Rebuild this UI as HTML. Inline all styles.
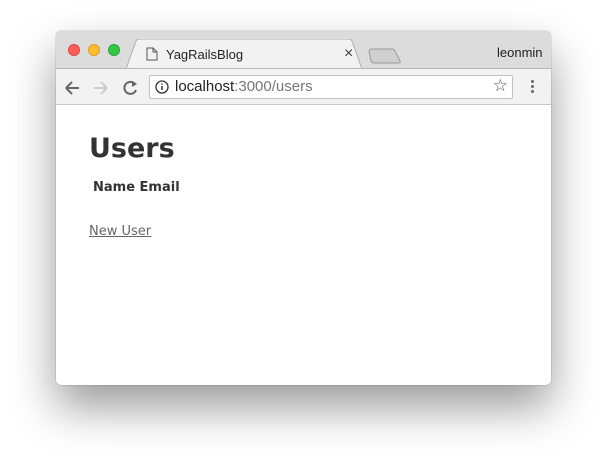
<!DOCTYPE html>
<html><head><style>
body{margin:0;width:607px;height:466px;background:#fff;position:relative;overflow:hidden;font-family:"Liberation Sans",sans-serif}
.win{position:absolute;left:56px;top:31px;width:495px;height:354px;border-radius:5px;background:#fff;box-shadow:0 22px 45px rgba(0,0,0,.4),0 0 1px rgba(0,0,0,.5);overflow:hidden}
.tabbar{position:absolute;left:0;top:0;width:495px;height:37px;background:#dcdcdc}
.dot{position:absolute;top:13px;width:12px;height:12px;border-radius:50%}
.tool{position:absolute;left:0;top:37px;width:495px;height:37px;background:#f2f2f2;border-bottom:1px solid #c8c8c8;border-top:1px solid #b8b8b8;box-sizing:border-box}
.url{position:absolute;left:93px;top:6px;width:364px;height:24px;background:#fff;border:1px solid #c2c2c2;border-radius:2px;box-sizing:border-box;font-size:15px;line-height:22px;color:#222}
.c{position:absolute;font-family:"DejaVu Sans",Verdana,sans-serif;color:#333}
</style></head><body>
<div class="win">
<div class="tabbar">
<div class="dot" style="left:12px;background:#fc5f57;border:.5px solid #de4a43;box-sizing:border-box"></div>
<div class="dot" style="left:32px;background:#fdbc2e;border:.5px solid #dea123;box-sizing:border-box"></div>
<div class="dot" style="left:52px;background:#33c748;border:.5px solid #27a63a;box-sizing:border-box"></div>
<svg style="position:absolute;left:70px;top:8px" width="280" height="30"><path d="M0 30 L10 2 Q11 0 14 0 L222 0 Q225 0 226 2 L236 30 Z" fill="#f2f2f2" stroke="#b0b0b0"/><path d="M243 12 Q244 10 246 10 L266 10 Q268 10 269 12 L274 22 Q275 24 272 24 L248 24 Q246 24 245 22 Z" fill="#cfcfcf" stroke="#9a9a9a"/></svg>
<svg style="position:absolute;left:90px;top:16px" width="12" height="14"><path d="M1 1h6l4 4v8H1z M7 1v4h4" fill="none" stroke="#555"/></svg>
<div style="position:absolute;left:110px;top:16px;font-size:13px;color:#222">YagRailsBlog</div>
<div style="position:absolute;left:288px;top:14px;font-size:16px;color:#444">×</div>
<div style="position:absolute;left:441px;top:14px;font-size:13px;color:#222">leonmin</div>
</div>
<div class="tool">
<svg style="position:absolute;left:8px;top:10px" width="80" height="18"><path d="M2 9h13M2 9l6-6M2 9l6 6" stroke="#666" stroke-width="2" fill="none"/><path d="M30 9h13M43 9l-6-6M43 9l-6 6" stroke="#ccc" stroke-width="2" fill="none"/><path d="M71 5A6 6 0 1 0 72 11" stroke="#666" stroke-width="2" fill="none"/><path d="M68 2l5 3-5 3z" fill="#666"/></svg>
<div class="url"><svg style="position:absolute;left:5px;top:4px" width="14" height="14"><circle cx="7" cy="7" r="6" fill="none" stroke="#333" stroke-width="1.3"/><path d="M7 6v4M7 3.5v1.3" stroke="#333" stroke-width="1.5"/></svg><span style="position:absolute;left:25px">localhost<span style="color:#777">:3000/users</span></span>
<span style="position:absolute;right:4px;top:-1px;font-size:17px;color:#555">☆</span></div>
<div style="position:absolute;left:475px;top:11px;width:3px"><div style="width:3px;height:3px;background:#666;border-radius:50%;margin-bottom:2px"></div><div style="width:3px;height:3px;background:#666;border-radius:50%;margin-bottom:2px"></div><div style="width:3px;height:3px;background:#666;border-radius:50%"></div></div>
</div>
<div class="c" style="left:33px;top:102px;font-size:27px;font-weight:bold">Users</div>
<div class="c" style="left:37px;top:149px;font-size:13px;font-weight:bold">Name Email</div>
<div class="c" style="left:33px;top:193px;font-size:13px;color:#666;text-decoration:underline">New User</div>
</div>
</body></html>
